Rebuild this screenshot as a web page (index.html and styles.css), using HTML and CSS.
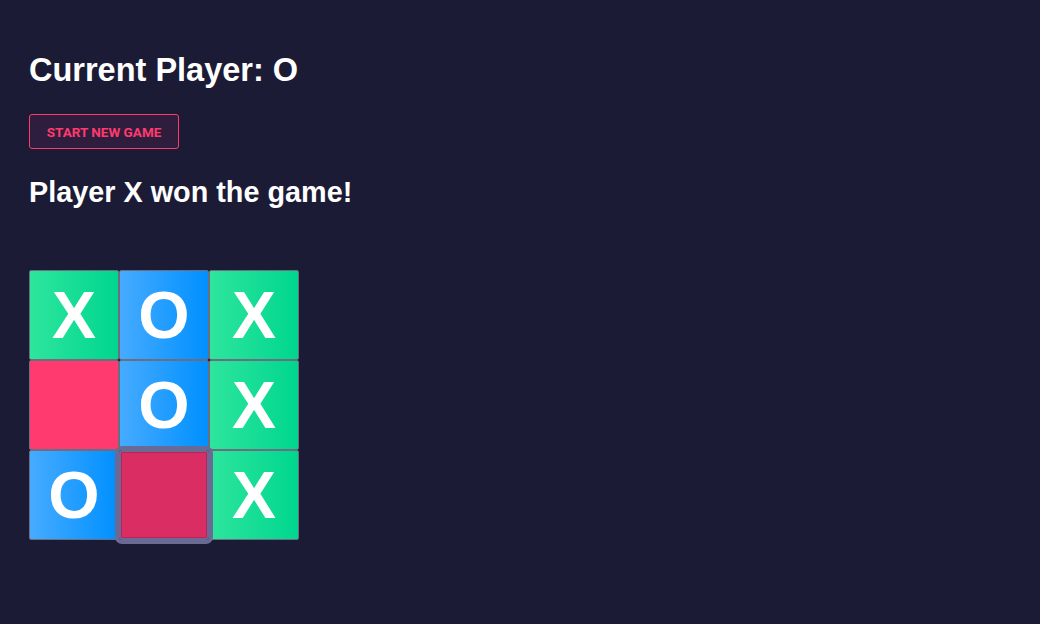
FILE: index.html
```html
<!DOCTYPE html>
<html lang="en">
<head>
<meta charset="utf-8">
<title>Tic Tac Toe</title>
<link rel="stylesheet" href="styles.css">
</head>
<body>
<main class="game">
  <h1 class="status">Current Player: O</h1>
  <button class="reset" type="button">Start new game</button>
  <h2 class="result">Player X won the game!</h2>
  <div class="board">
    <div class="cell x">X</div>
    <div class="cell o">O</div>
    <div class="cell x">X</div>
    <div class="cell empty"></div>
    <div class="cell o">O</div>
    <div class="cell x">X</div>
    <div class="cell o">O</div>
    <div class="cell empty focused"></div>
    <div class="cell x">X</div>
  </div>
</main>
</body>
</html>
```
FILE: styles.css
```css
html, body {
  margin: 0;
  padding: 0;
  background: #1c1b36;
  height: 100%;
}
body {
  font-family: "Liberation Sans", Arial, sans-serif;
  color: #ffffff;
}
.game {
  padding: 52px 29px;
  display: flex;
  flex-direction: column;
  align-items: flex-start;
}
.status,
.result {
  margin: 0;
  font-weight: 700;
}
.status {
  font-size: 32.5px;
  line-height: 37px;
}
.result {
  margin-top: 27px;
  font-size: 28.8px;
  line-height: 33px;
}
.reset {
  margin-top: 25px;
  width: 150px;
  height: 35px;
  padding: 0;
  border: 1px solid #ff3a6e;
  border-radius: 3px;
  background: #2f1d3d;
  color: #ff3a6e;
  font-family: Roboto, "Liberation Sans", sans-serif;
  font-weight: 700;
  font-size: 13.5px;
  text-transform: uppercase;
}
.board {
  margin-top: 61px;
  display: grid;
  grid-template-columns: repeat(3, 90px);
  grid-template-rows: repeat(3, 90px);
}
.cell {
  box-sizing: border-box;
  border: 1px solid #6e6d80;
  border-radius: 2px;
  display: flex;
  align-items: center;
  justify-content: center;
  font-size: 66px;
  font-weight: 700;
  color: #ffffff;
}
.cell.x {
  background: linear-gradient(90deg, #2ee59d 0%, #00d68f 100%);
}
.cell.o {
  background: linear-gradient(90deg, #46abff 0%, #0090ff 100%);
}
.cell.empty {
  background: #ff3a6e;
}
.cell.focused {
  background: #d92d64;
  border: 2px solid #6b6a94;
  border-radius: 3px;
  box-shadow: inset 0 0 0 1px #bb2459;
  outline: 4px solid #6b6a94;
  outline-offset: 0;
  position: relative;
  z-index: 1;
}
```
